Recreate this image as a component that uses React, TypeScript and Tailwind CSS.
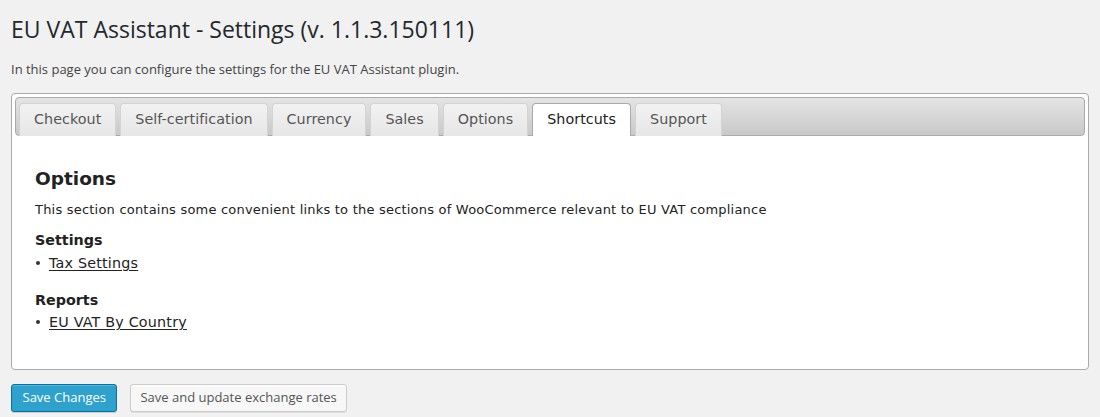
import React from 'react'

const tabs = ['Checkout', 'Self-certification', 'Currency', 'Sales', 'Options', 'Shortcuts', 'Support']

const ShortcutList = ({ links }: { links: string[] }) => (
  <ul>
    {links.map((l) => (
      <li key={l} className="flex items-center leading-[18px] text-[14.3px] text-[#222]">
        <span className="w-[4px] h-[4px] rounded-full bg-[#333] ml-[1px] mr-[9px]" />
        <a href="#" className="underline underline-offset-[2px] decoration-[1px] text-[#222] tracking-[0.2px]">{l}</a>
      </li>
    ))}
  </ul>
)

export default function App() {
  const active = 'Shortcuts'

  return (
    <div className="min-h-[417px] bg-[#f1f1f1] px-[11px] pt-[15px] font-['Open_Sans',sans-serif]">
      {/* Page title */}
      <h2 className="text-[23px] leading-[29px] text-[#23282d] font-normal">
        EU VAT Assistant - Settings (v. 1.1.3.150111)
      </h2>
      <p className="mt-[16px] text-[13px] leading-[19.5px] text-[#444]">
        In this page you can configure the settings for the EU VAT Assistant plugin.
      </p>

      {/* Tabs panel */}
      <div className="mt-[13px] bg-white border border-[#aaa] rounded-[4px] p-[3px] font-['DejaVu_Sans',Verdana,sans-serif]">
        <div className="h-[39px] flex items-end gap-[4px] pl-[3px] border border-[#aaa] rounded-[4px] bg-gradient-to-b from-[#e4e4e4] to-[#c9c9c9]">
          {tabs.map((t) => {
            const isActive = t === active
            return (
              <div
                key={t}
                className={
                  isActive
                    ? 'h-[33px] -mb-px px-[14px] flex items-center border border-b-0 border-[#aaa] rounded-t-[4px] bg-white text-[14.3px] text-[#212121] tracking-[0.05px]'
                    : 'h-[33px] -mb-px px-[14px] flex items-center border border-b-0 border-[#d3d3d3] rounded-t-[4px] bg-gradient-to-b from-[#f2f2f2] to-[#e6e6e6] text-[14.3px] text-[#555] tracking-[0.05px]'
                }
              >
                {t}
              </div>
            )
          })}
        </div>

        <div className="px-[20px] pt-[32px] pb-[35px] text-[#222]">
          <h3 className="text-[18.5px] leading-[22px] font-bold">Options</h3>
          <p className="mt-[12px] text-[13px] leading-[16px] text-[#222] tracking-[0.21px]">
            This section contains some convenient links to the sections of WooCommerce relevant to EU VAT compliance
          </p>
          <h4 className="mt-[13px] text-[14.3px] leading-[18px] font-bold">Settings</h4>
          <div className="mt-[5px]">
            <ShortcutList links={['Tax Settings']} />
          </div>
          <h4 className="mt-[19px] text-[14.3px] leading-[18px] font-bold">Reports</h4>
          <div className="mt-[4px]">
            <ShortcutList links={['EU VAT By Country']} />
          </div>
        </div>
      </div>

      {/* Buttons */}
      <div className="mt-[14px] flex gap-[13px]">
        <button className="h-[28px] px-[10.5px] text-[13px] text-white bg-[#2ea2cc] border border-[#0074a2] rounded-[3px] shadow-[inset_0_1px_0_rgba(120,200,230,0.5),0_1px_0_rgba(0,0,0,0.15)]">
          Save Changes
        </button>
        <button className="h-[28px] px-[9px] text-[13px] text-[#555] bg-[#f7f7f7] border border-[#ccc] rounded-[3px] shadow-[inset_0_1px_0_#fff,0_1px_0_rgba(0,0,0,0.08)]">
          Save and update exchange rates
        </button>
      </div>
    </div>
  )
}
